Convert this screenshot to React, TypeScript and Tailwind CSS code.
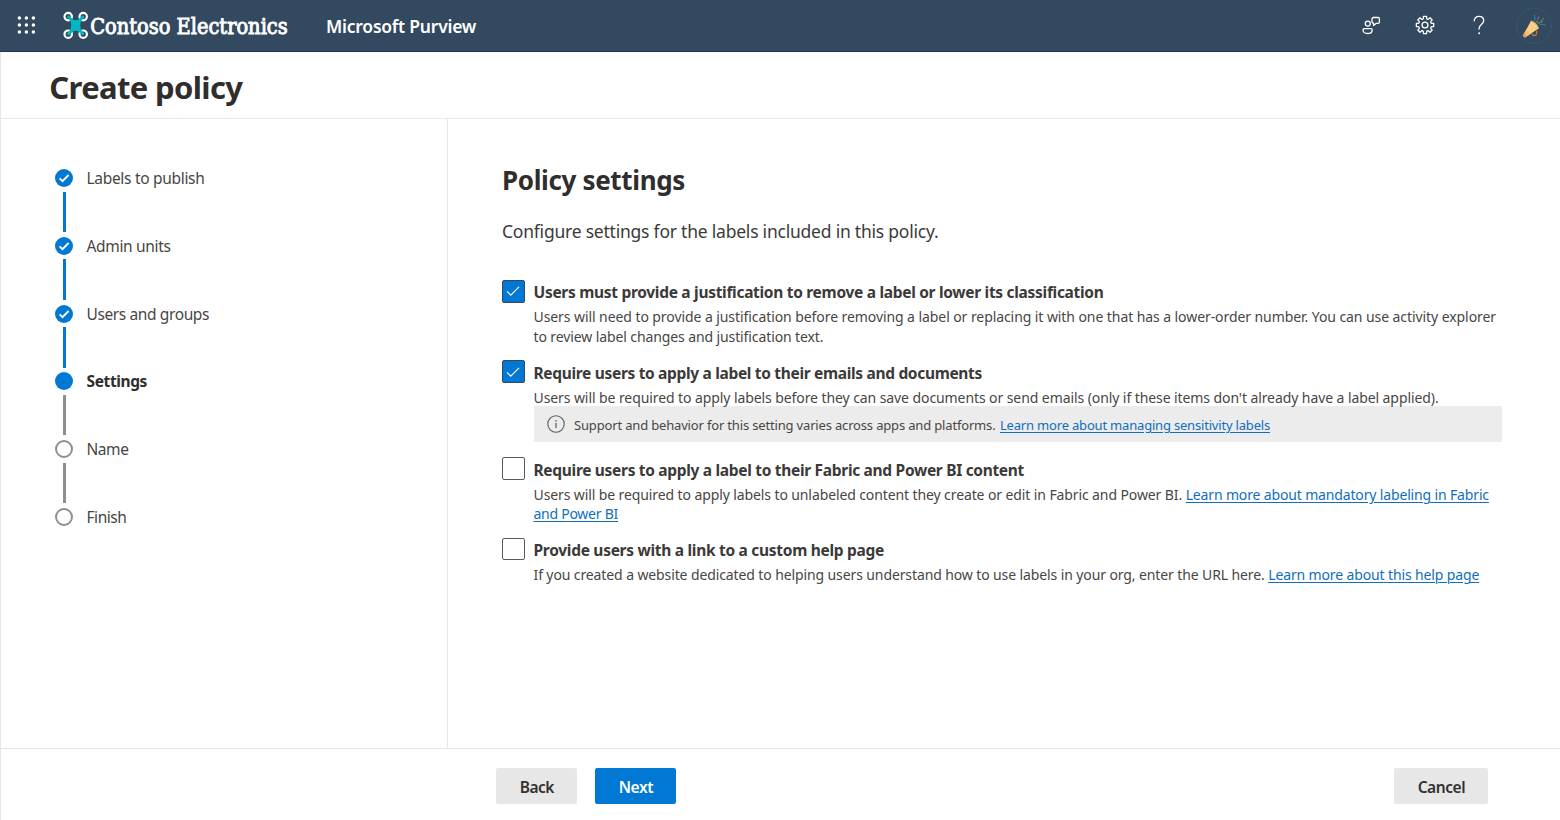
import React from "react";
import clsx from "clsx";

type StepState = "done" | "current" | "todo";

const steps: { label: string; state: StepState; tracking: string }[] = [
  { label: "Labels to publish", state: "done", tracking: "tracking-[-0.306px]" },
  { label: "Admin units", state: "done", tracking: "tracking-[-0.338px]" },
  { label: "Users and groups", state: "done", tracking: "tracking-[-0.389px]" },
  { label: "Settings", state: "current", tracking: "tracking-[-0.379px]" },
  { label: "Name", state: "todo", tracking: "tracking-[-0.428px]" },
  { label: "Finish", state: "todo", tracking: "tracking-[-0.438px]" },
];

function polar(r: number, deg: number) {
  const a = (deg * Math.PI) / 180;
  return `${(10 + r * Math.sin(a)).toFixed(2)} ${(10 - r * Math.cos(a)).toFixed(2)}`;
}

// Eight-toothed cog outline centred in a 20x20 box.
const gearPath =
  Array.from({ length: 8 }, (_, i) => {
    const a = i * 45;
    return `${i === 0 ? "M" : "L"}${polar(8.8, a - 10)} L${polar(8.8, a + 10)} L${polar(6.6, a + 15)} Q${polar(5.9, a + 22.5)} ${polar(6.6, a + 30)}`;
  }).join(" ") + "Z";

function Waffle() {
  return (
    <svg className="h-5 w-5" viewBox="0 0 20 20" fill="#fff">
      {[3, 10, 17].map((y) => [3.4, 10.4, 17.4].map((x) => <circle key={`${x}-${y}`} cx={x} cy={y} r="1.75" />))}
    </svg>
  );
}

function Brand() {
  return (
    <svg className="h-[52px] w-[232px] overflow-visible" viewBox="0 0 232 52">
      <g fill="none" stroke="#fff" strokeWidth="2.2">
        <circle cx="7.2" cy="16.6" r="3.7" />
        <circle cx="22.2" cy="16.6" r="3.7" />
        <circle cx="7.2" cy="34.2" r="3.7" />
        <circle cx="22.2" cy="34.2" r="3.7" />
      </g>
      <path
        d="M5.8 17L7.8 15.2L12 19.4Q14.7 20.6 17.4 19.4L21.6 15.2L23.6 17L19.8 21.6Q18.4 25.4 19.8 29.2L23.6 33.8L21.6 35.6L17.4 31.4Q14.7 30.2 12 31.4L7.8 35.6L5.8 33.8L9.6 29.2Q11 25.4 9.6 21.6Z"
        fill="#00b7c3"
      />
      <text
        x="29.2"
        y="34.2"
        fill="#fff"
        className="font-['DejaVu_Serif_Condensed','DejaVu_Serif',serif] text-[22.5px]"
        stroke="#fff"
        strokeWidth="0.9"
        textLength="197.5"
        lengthAdjust="spacingAndGlyphs"
      >
        Contoso Electronics
      </text>
    </svg>
  );
}

function FeedbackIcon() {
  return (
    <svg className="h-5 w-5" viewBox="0 0 20 20" fill="none" stroke="#fff" strokeWidth="1.3" strokeLinejoin="round">
      <circle cx="6.8" cy="8.6" r="2.5" />
      <path d="M3.2 13.7H10A1.2 1.2 0 0 1 11.2 14.9C11.2 17.2 9.4 18.5 6.6 18.5S2 17.2 2 14.9A1.2 1.2 0 0 1 3.2 13.7Z" />
      <path d="M12.4 2.5H17A1.4 1.4 0 0 1 18.4 3.9V6.9A1.4 1.4 0 0 1 17 8.3H15.4L12.6 10.6V8.2A1.5 1.5 0 0 1 11 6.7V3.9A1.4 1.4 0 0 1 12.4 2.5Z" />
    </svg>
  );
}

function GearIcon() {
  return (
    <svg className="h-5 w-5" viewBox="0 0 20 20" fill="none" stroke="#fff" strokeWidth="1.3" strokeLinejoin="round">
      <path d={gearPath} />
      <circle cx="10" cy="10" r="2.9" />
    </svg>
  );
}

function HelpIcon() {
  return (
    <svg className="h-5 w-5" viewBox="0 0 20 20" fill="none" stroke="#fff" strokeWidth="1.35">
      <path d="M5.2 6.2C5.2 3.2 7.1 1.4 9.9 1.4S14.7 3.2 14.7 5.7C14.7 9.2 10.1 9.7 10.1 13.2V14.6" />
      <circle cx="10.1" cy="18.2" r="0.95" fill="#fff" stroke="none" />
    </svg>
  );
}

function Avatar() {
  return (
    <svg className="h-9 w-9" viewBox="0 0 36 36" fill="none">
      <circle cx="18" cy="18" r="17.5" stroke="#3d5369" />
      <path d="M15.7 25.5C16.6 28.6 20.4 28.4 20.6 25.2L20.8 22.5" stroke="#c9704c" strokeWidth="1.3" />
      <path d="M7 27.6L14.8 13.2Q20 14.4 22.6 20.6L9 29.4Z" fill="#fbd184" />
      <path d="M7 27.6L10.6 20.9Q13 22.6 14 26.2L9 29.4Z" fill="#f6c06e" />
      <path d="M7 27.6L8.4 25.1Q10.3 26 10.9 28.2L9 29.4Q7 29.4 7 27.6Z" fill="#f09a5b" />
      <path d="M14.8 13.2Q20 14.4 22.6 20.6" stroke="#f4b468" strokeWidth="1.2" />
      <path d="M18.6 13.6Q19.4 10 18.2 6.6M23.4 17Q26 15.6 29.8 17.4" stroke="#1d7f94" strokeWidth="1.4" />
      <path d="M20.5 14.5L22 12.5M22.4 15.8L27.6 10.4" stroke="#5d9f5f" strokeWidth="1.3" strokeDasharray="2 1" />
      <path d="M21.6 11.4L23 8.4M24.6 14.6L26.8 13.2" stroke="#a0568f" strokeWidth="1.3" />
    </svg>
  );
}

function StepMarker({ state }: { state: StepState }) {
  return (
    <svg className="h-[18px] w-[18px] shrink-0" viewBox="0 0 18 18" fill="none">
      {state === "todo" ? (
        <circle cx="9" cy="9" r="8" stroke="#8f8f8f" strokeWidth="2" />
      ) : (
        <circle cx="9" cy="9" r="9" fill="#0078d4" />
      )}
      {state === "done" && <path d="M4.6 9.4L7.5 12.2L13.6 6" stroke="#fff" strokeWidth="1.9" />}
    </svg>
  );
}

function Checkbox({ checked = false }: { checked?: boolean }) {
  return (
    <span
      role="checkbox"
      aria-checked={checked}
      className={clsx(
        "flex h-[22.5px] w-[22.5px] shrink-0 items-center justify-center rounded-[2px] border",
        checked ? "border-[#34495c] bg-[#0078d4]" : "border-[#5c5a58] bg-white",
      )}
    >
      {checked && (
        <svg className="h-3 w-[14px]" viewBox="0 0 14 12" fill="none" stroke="#fff" strokeWidth="1.15">
          <path d="M1 6.3L4.8 10.1L13 1.9" />
        </svg>
      )}
    </span>
  );
}

function Setting(props: {
  title: string;
  tracking: string;
  checked?: boolean;
  className?: string;
  children: React.ReactNode;
}) {
  return (
    <section className={clsx("flex gap-[9px]", props.className)}>
      <Checkbox checked={props.checked} />
      <div className="w-[968.5px]">
        <h3
          className={clsx(
            "h-6 pt-[0.4px] text-[15.5px] leading-6 font-bold whitespace-nowrap text-[#3b3a39]",
            props.tracking,
          )}
        >
          {props.title}
        </h3>
        {props.children}
      </div>
    </section>
  );
}

function Line({ tracking, children, className }: { tracking: string; children: React.ReactNode; className?: string }) {
  return (
    <p className={clsx("text-[14px] leading-[19.4px] whitespace-nowrap text-[#484644]", tracking, className)}>
      {children}
    </p>
  );
}

function Link({ tracking, children }: { tracking: string; children: React.ReactNode }) {
  return (
    <a href="#" className={clsx("text-[#106ebe] underline decoration-1 underline-offset-[1.5px]", tracking)}>
      {children}
    </a>
  );
}

export default function App() {
  return (
    <div className="flex h-[820px] w-[1560px] flex-col overflow-hidden bg-white font-['Noto_Sans',sans-serif]">
      <header className="flex h-[52px] shrink-0 items-center border-b border-[#22374d] bg-[#32495f] pr-2">
        <div className="flex w-[60.5px] pb-px pl-4">
          <Waffle />
        </div>
        <Brand />
        <span className="ml-[33.5px] pt-px text-[17.5px] leading-6 font-semibold tracking-[-0.23px] whitespace-nowrap text-white">
          Microsoft Purview
        </span>
        <div className="ml-auto flex items-center">
          <div className="flex items-center gap-[34px] pb-px">
            <FeedbackIcon />
            <GearIcon />
            <HelpIcon />
          </div>
          <div className="ml-[27px]">
            <Avatar />
          </div>
        </div>
      </header>

      <div className="flex min-h-0 grow flex-col border-l border-[#e6e6e6]">
        <div className="flex h-[67px] shrink-0 items-center border-b border-[#e8e8e8] pt-[3px] pl-[48.3px]">
          <h1 className="text-[31px] leading-10 font-bold tracking-[-0.647px] text-[#2f2e2d]">Create policy</h1>
        </div>

        <div className="flex min-h-0 grow">
          <nav className="w-[447px] shrink-0 border-r border-[#e8e8e8] pt-[50px] pl-[54px]">
            {steps.map((step, i) => (
              <div key={step.label} className={i < steps.length - 1 ? "h-[67.75px]" : ""}>
                <div className="flex h-[18px] items-center gap-[13.5px]">
                  <StepMarker state={step.state} />
                  <span
                    className={clsx(
                      "text-[15.5px] leading-[18px] whitespace-nowrap",
                      step.tracking,
                      step.state === "current" ? "font-bold text-[#2f2e2d]" : "text-[#484644]",
                    )}
                  >
                    {step.label}
                  </span>
                </div>
                {i < steps.length - 1 && (
                  <div
                    className={clsx(
                      "mt-[4.5px] ml-[8px] h-[40.5px] w-[2.5px]",
                      step.state === "done" ? "bg-[#0078d4]" : "bg-[#8f8f8f]",
                    )}
                  />
                )}
              </div>
            ))}
          </nav>

          <main className="grow pt-[43px] pl-[54px]">
            <h2 className="h-9 text-[26px] leading-9 font-bold tracking-[-0.349px] text-[#2f2e2d]">Policy settings</h2>
            <p className="mt-[21px] h-6 text-[17.5px] leading-6 tracking-[-0.221px] text-[#3b3a39]">
              Configure settings for the labels included in this policy.
            </p>

            <div className="mt-[37px]">
              <Setting
                checked
                className="h-[80.4px]"
                tracking="tracking-[-0.301px]"
                title="Users must provide a justification to remove a label or lower its classification"
              >
                <Line tracking="tracking-[-0.077px]" className="mt-[3.4px]">
                  Users will need to provide a justification before removing a label or replacing it with one that has a
                  lower-order number. You can use activity explorer
                  <br />
                  <span className="tracking-[-0.106px]">to review label changes and justification text.</span>
                </Line>
              </Setting>

              <Setting
                checked
                className="h-[97px]"
                tracking="tracking-[-0.324px]"
                title="Require users to apply a label to their emails and documents"
              >
                <Line tracking="tracking-[-0.085px]" className="mt-[3.4px]">
                  Users will be required to apply labels before they can save documents or send emails (only if these
                  items don't already have a label applied).
                </Line>
                <div className="-mt-[1px] flex h-9 items-center bg-[#ececec] pl-[13px] text-[13px] leading-[18px] whitespace-nowrap text-[#484644]">
                  <svg className="mr-[9.5px] h-[18px] w-[18px]" viewBox="0 0 18 18" fill="none" stroke="#5c5a58">
                    <circle cx="9" cy="9" r="8.2" strokeWidth="1.1" />
                    <path d="M9 7.8V13M9 5.1V6.4" strokeWidth="1.2" />
                  </svg>
                  <span className="mr-[4.5px] pt-px tracking-[-0.166px]">
                    Support and behavior for this setting varies across apps and platforms.
                  </span>
                  <span className="pt-px">
                    <Link tracking="tracking-[-0.189px]">Learn more about managing sensitivity labels</Link>
                  </span>
                </div>
              </Setting>

              <Setting
                className="h-[80.4px]"
                tracking="tracking-[-0.31px]"
                title="Require users to apply a label to their Fabric and Power BI content"
              >
                <Line tracking="tracking-[-0.106px]" className="mt-[3.4px]">
                  Users will be required to apply labels to unlabeled content they create or edit in Fabric and Power BI.{" "}
                  <Link tracking="tracking-[-0.15px]">
                    Learn more about mandatory labeling in Fabric
                    <br />
                    <span className="tracking-[-0.258px]">and Power BI</span>
                  </Link>
                </Line>
              </Setting>

              <Setting tracking="tracking-[-0.29px]" title="Provide users with a link to a custom help page">
                <Line tracking="tracking-[-0.11px]" className="mt-[3.4px]">
                  If you created a website dedicated to helping users understand how to use labels in your org, enter the
                  URL here. <Link tracking="tracking-[-0.132px]">Learn more about this help page</Link>
                </Line>
              </Setting>
            </div>
          </main>
        </div>

        <footer className="flex h-[72px] shrink-0 items-center border-t border-[#e8e8e8] pt-0.5 pr-[71.6px] pl-[495.4px] text-[15.5px] font-semibold">
          <button className="h-9 w-[81px] rounded-[2px] bg-[#e7e7e7] pt-[4px] tracking-[-0.5px] text-[#323130]">
            Back
          </button>
          <button className="ml-[18px] h-9 w-[81px] rounded-[2px] bg-[#0078d4] pt-[4px] tracking-[-0.381px] text-white">
            Next
          </button>
          <button className="ml-auto h-9 w-[94px] rounded-[2px] bg-[#e7e7e7] pt-[4px] tracking-[-0.43px] text-[#323130]">
            Cancel
          </button>
        </footer>
      </div>
    </div>
  );
}
